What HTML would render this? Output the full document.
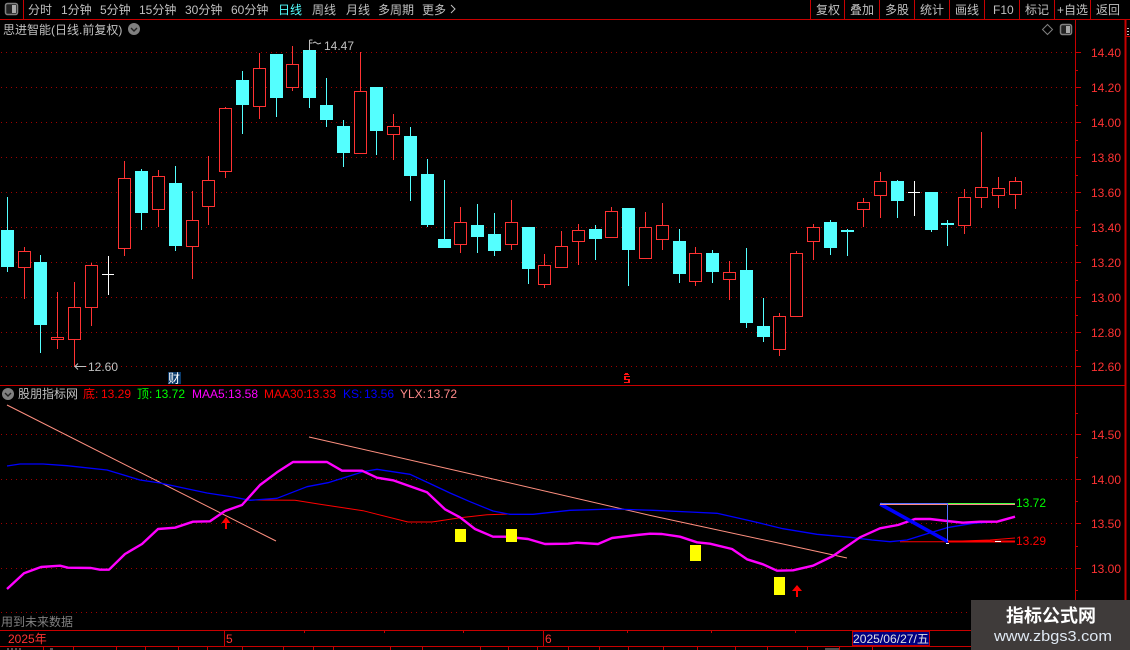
<!DOCTYPE html>
<html><head><meta charset="utf-8"><title>K线</title>
<style>
html,body{margin:0;padding:0;background:#000;width:1130px;height:650px;overflow:hidden}
svg{display:block}
text{font-family:"Liberation Sans","WenQuanYi Zen Hei","Noto Sans CJK SC",sans-serif;font-size:12px}
.g{fill:#c0c0c0}.r{fill:#ff3232}
</style></head><body>
<svg width="1130" height="650" viewBox="0 0 1130 650" xmlns="http://www.w3.org/2000/svg">
<rect width="1130" height="650" fill="#000"/>
<!-- grid -->
<g stroke="#a00000" stroke-dasharray="1 4" fill="none">
<path d="M1 52.5H1075M1 87.5H1075M1 122.5H1075M1 157.5H1075M1 192.5H1075M1 227.5H1075M1 262.5H1075M1 297.5H1075M1 332.5H1075M1 366.5H1075M1 434.5H1075M1 479.5H1075M1 523.5H1075M1 568.5H1075M1 612.5H971"/>
</g>
<!-- frame -->
<g stroke="#c80000" fill="none" shape-rendering="crispEdges">
<path d="M0 19.5H1130M23.5 0V19M810.5 0V19M844.5 0V19M879.5 0V19M914.5 0V19M949.5 0V19M984.5 0V19M1019.5 0V19M1054.5 0V19M1090.5 0V19"/>
<path d="M1075.5 19V600M0 385.5H1126M0 630.5H971M0 646.5H971M224.5 630V646M543.5 630V646M1126 36.5H1130"/>
<path d="M1125.5 19V600" stroke-width="2"/>
<path d="M304.5 630V633M384.5 630V633M463.5 630V633M627.5 630V633M711.5 630V633M795.5 630V633M43.5 646V650M73.5 646V650M116.5 646V650M145.5 646V650M178.5 646V650M207.5 646V650M242.5 646V650M283.5 646V650M313.5 646V650M333.5 646V650M390.5 646V650M422.5 646V650M480.5 646V650M508.5 646V650M537.5 646V650M568.5 646V650M599.5 646V650M628.5 646V650M663.5 646V650M697.5 646V650M735.5 646V650M767.5 646V650M807.5 646V650M839.5 646V650M872.5 646V650"/>
<path d="M1075 52.5H1081M1075 87.5H1081M1075 122.5H1081M1075 157.5H1081M1075 192.5H1081M1075 227.5H1081M1075 262.5H1081M1075 297.5H1081M1075 332.5H1081M1075 366.5H1081M1075 70.5H1078M1075 105.5H1078M1075 140.5H1078M1075 175.5H1078M1075 210.5H1078M1075 245.5H1078M1075 280.5H1078M1075 315.5H1078M1075 350.5H1078M1075 434.5H1081M1075 479.5H1081M1075 523.5H1081M1075 568.5H1081M1075 413.5H1078M1075 457.5H1078M1075 501.5H1078M1075 546.5H1078M1075 590.5H1078"/>
</g>
<path d="M1127 28.5h2M1127 31.5h2M1127 34.5h2" stroke="#c0c0c0" shape-rendering="crispEdges"/>
<path d="M7 649h2M11 649h2M15 649h2M19 649h2M50 649h3M825 649h14" stroke="#a0a0a0" shape-rendering="crispEdges"/>
<!-- top-left icon -->
<rect x="5.5" y="3.5" width="12" height="11" rx="2" fill="#222" stroke="#808080" stroke-width="1.5"/>
<rect x="12" y="5" width="4" height="8" fill="#a8a8a8"/>
<!-- toolbar text -->
<g class="g">
<text x="28" y="14">分时</text><text x="61" y="14">1分钟</text><text x="100" y="14">5分钟</text><text x="139" y="14">15分钟</text><text x="185" y="14">30分钟</text><text x="231" y="14">60分钟</text>
<text x="278" y="14" style="fill:#54ffff">日线</text><text x="312" y="14">周线</text><text x="346" y="14">月线</text><text x="378" y="14">多周期</text><text x="422" y="14">更多</text>
<text x="816" y="14">复权</text><text x="850" y="14">叠加</text><text x="885" y="14">多股</text><text x="920" y="14">统计</text><text x="955" y="14">画线</text><text x="993" y="14">F10</text><text x="1025" y="14">标记</text><text x="1057" y="14">+自选</text><text x="1096" y="14">返回</text>
<text x="3" y="34">思进智能(日线.前复权)</text>
</g>
<path d="M451 5l4 4-4 4" stroke="#c0c0c0" fill="none"/>
<circle cx="134" cy="29" r="6" fill="#808080"/><path d="M131 28l3 3 3-3" stroke="#222" stroke-width="1.4" fill="none"/>
<path d="M1047.5 24.5l5 5-5 5-5-5z" stroke="#808080" fill="none"/>
<rect x="1060.5" y="24.5" width="11" height="10" rx="2" fill="#222" stroke="#808080" stroke-width="1.5"/><rect x="1066" y="26" width="4" height="7" fill="#a8a8a8"/>
<!-- candle wicks -->
<g shape-rendering="crispEdges" fill="none">
<path stroke="#54ffff" d="M7.5 197V272M40.5 255V353M141.5 169V230M175.5 166V251M242.5 71V134M276.5 54V117M309.5 43V108M326.5 78V127M343.5 120V167M376.5 87V155M410.5 127V201M427.5 159V227M444.5 180V248M477.5 204V253M494.5 213V256M528.5 227V284M595.5 225V260M628.5 208V286M679.5 229V283M712.5 250V283M746.5 248V328M763.5 298V342M830.5 220V255M847.5 229V256M897.5 180V218M931.5 192V232M947.5 220V246"/>
<path stroke="#ff3232" d="M24.5 247V299M57.5 292V349M74.5 282V367M91.5 263V326M124.5 161V256M158.5 170V227M192.5 191V279M208.5 156V225M225.5 107V178M259.5 53V119M292.5 46V91M360.5 52V154M393.5 114V160M460.5 207V253M511.5 200V250M544.5 254V288M561.5 231V268M578.5 224V265M611.5 207V238M645.5 212V259M662.5 203V250M695.5 247V286M729.5 261V300M779.5 313V356M796.5 251V317M813.5 224V260M863.5 198V227M880.5 172V218M964.5 189V234M981.5 132V208M998.5 177V208M1015.5 177V209"/>
<path stroke="#fff" d="M108.5 256V295M102 274.5H114M914.5 181V216M908 192.5H920"/>
</g>
<!-- red bodies -->
<g fill="#000" stroke="#ff3232" shape-rendering="crispEdges">
<rect x="18.5" y="251.5" width="12" height="16"/><rect x="51.5" y="337.5" width="12" height="2"/><rect x="68.5" y="307.5" width="12" height="32"/><rect x="85.5" y="265.5" width="12" height="42"/><rect x="118.5" y="178.5" width="12" height="70"/><rect x="152.5" y="176.5" width="12" height="33"/><rect x="186.5" y="220.5" width="12" height="26"/><rect x="202.5" y="180.5" width="12" height="26"/><rect x="219.5" y="108.5" width="12" height="63"/><rect x="253.5" y="68.5" width="12" height="38"/><rect x="286.5" y="64.5" width="12" height="23"/><rect x="354.5" y="91.5" width="12" height="62"/><rect x="387.5" y="126.5" width="12" height="8"/><rect x="454.5" y="222.5" width="12" height="22"/><rect x="505.5" y="222.5" width="12" height="22"/><rect x="538.5" y="265.5" width="12" height="19"/><rect x="555.5" y="246.5" width="12" height="21"/><rect x="572.5" y="230.5" width="12" height="11"/><rect x="605.5" y="211.5" width="12" height="26"/><rect x="639.5" y="227.5" width="12" height="31"/><rect x="656.5" y="225.5" width="12" height="14"/><rect x="689.5" y="253.5" width="12" height="28"/><rect x="723.5" y="272.5" width="12" height="7"/><rect x="773.5" y="316.5" width="12" height="33"/><rect x="790.5" y="253.5" width="12" height="63"/><rect x="807.5" y="227.5" width="12" height="14"/><rect x="857.5" y="202.5" width="12" height="7"/><rect x="874.5" y="181.5" width="12" height="14"/><rect x="958.5" y="197.5" width="12" height="28"/><rect x="975.5" y="187.5" width="12" height="10"/><rect x="992.5" y="188.5" width="12" height="7"/><rect x="1009.5" y="181.5" width="12" height="13"/>
</g>
<!-- cyan bodies -->
<g fill="#54ffff" shape-rendering="crispEdges">
<rect x="1" y="230" width="13" height="37"/><rect x="34" y="262" width="13" height="63"/><rect x="135" y="171" width="13" height="42"/><rect x="169" y="183" width="13" height="63"/><rect x="236" y="80" width="13" height="25"/><rect x="270" y="54" width="13" height="44"/><rect x="303" y="50" width="13" height="48"/><rect x="320" y="105" width="13" height="15"/><rect x="337" y="126" width="13" height="27"/><rect x="370" y="87" width="13" height="44"/><rect x="404" y="136" width="13" height="40"/><rect x="421" y="174" width="13" height="51"/><rect x="438" y="239" width="13" height="9"/><rect x="471" y="225" width="13" height="12"/><rect x="488" y="234" width="13" height="17"/><rect x="522" y="227" width="13" height="42"/><rect x="589" y="229" width="13" height="10"/><rect x="622" y="208" width="13" height="42"/><rect x="673" y="241" width="13" height="33"/><rect x="706" y="253" width="13" height="19"/><rect x="740" y="270" width="13" height="53"/><rect x="757" y="326" width="13" height="11"/><rect x="824" y="222" width="13" height="26"/><rect x="841" y="230" width="13" height="2"/><rect x="891" y="181" width="13" height="20"/><rect x="925" y="192" width="13" height="38"/><rect x="941" y="223" width="13" height="2"/>
</g>
<!-- price labels -->
<g class="r">
<text x="1091" y="57">14.40</text><text x="1091" y="92">14.20</text><text x="1091" y="127">14.00</text><text x="1091" y="162">13.80</text><text x="1091" y="197">13.60</text><text x="1091" y="232">13.40</text><text x="1091" y="267">13.20</text><text x="1091" y="302">13.00</text><text x="1091" y="337">12.80</text><text x="1091" y="371">12.60</text>
<text x="1091" y="439">14.50</text><text x="1091" y="484">14.00</text><text x="1091" y="528">13.50</text><text x="1091" y="573">13.00</text>
</g>
<!-- hi/lo marks -->
<path d="M309.5 50V40M309.5 40h3M309.5 43h3M313 43l2-1 3 2 3-1" stroke="#c0c0c0" fill="none"/>
<text x="324" y="50" class="g">14.47</text>
<path d="M86 366.5H75M78 363.5l-3 3 3 3" stroke="#c0c0c0" fill="none"/>
<text x="88" y="371" class="g">12.60</text>
<rect x="168" y="372" width="13" height="12" fill="#0a3a6a"/>
<text x="168" y="382.500" style="fill:#fff">财</text>
<!-- S mark -->
<g fill="#ff1414" shape-rendering="crispEdges"><rect x="625" y="373" width="3" height="1"/><rect x="624" y="374" width="5" height="1"/><rect x="624" y="376" width="6" height="1"/><rect x="624" y="377" width="2" height="2"/><rect x="624" y="379" width="6" height="1"/><rect x="628" y="380" width="2" height="2"/><rect x="624" y="382" width="6" height="1"/></g>
<!-- legend -->
<circle cx="8" cy="394" r="6" fill="#808080"/><path d="M5 393l3 3 3-3" stroke="#222" stroke-width="1.4" fill="none"/>
<text x="18" y="398" class="g">股朋指标网</text>
<text x="83" y="398" style="fill:#ff0000">底:</text><text x="101" y="398" style="fill:#ff0000">13.29</text>
<text x="137" y="398" style="fill:#00ff00">顶:</text><text x="155" y="398" style="fill:#00ff00">13.72</text>
<text x="192" y="398" style="fill:#ff00ff">MAA5:</text><text x="228" y="398" style="fill:#ff00ff">13.58</text>
<text x="264" y="398" style="fill:#ff0000">MAA30:</text><text x="306" y="398" style="fill:#ff0000">13.33</text>
<text x="343" y="398" style="fill:#0000ff">KS:</text><text x="364" y="398" style="fill:#0000ff">13.56</text>
<text x="400" y="398" style="fill:#ff8a8a">YLX:</text><text x="427" y="398" style="fill:#ff8a8a">13.72</text>
<text x="1" y="626" style="fill:#808080">用到未来数据</text>
<!-- indicator lines -->
<g fill="none" stroke-linejoin="round">
<path stroke="#ff9080" d="M7 405L276 541M309 437L480 476L650 515.400L783 544L847 558"/>
<path stroke="#ff0000" d="M250 500L295 500.300L320 504.300L363 510.700L408 522L432 522L460 517.700L487 514.700L510 514"/>
<path stroke="#ff0000" d="M900 541.700H948M948 541.500L990 540L1015 538"/>
<path stroke="#0000ff" stroke-width="1.300" d="M7 466L20 464L43 464L67 465.700L107 470L140 480L160 483L207 493L233 497L250 500.300L277 498.300L307 486.700L328 482.700L363 471.700L377 469.300L410 474.300L433 485L450 493L470 501.700L493 511L510 514.300L533 514.300L570 510.300L613 509L653 510.300L690 512L717 513.300L750 520.700L783 528.700L817 534.300L850 537.300L872 540L890 541.700L907 540L923 535L947 527.700L973 523.300L997 521.700L1015 516.700"/>
<path stroke="#ff00ff" stroke-width="2.400" d="M7 589L24 573.300L41 567L60 565.700L68 567.700L91 568L100 569.700L109 569.700L125 554L142 544L158 529L175 527.700L193 521.700L210 521.300L225 511L242 505L260 485L277 472.300L293 462L327 462L342 470.700L362 470.700L377 477.700L393 480.300L427 492.300L445 509.300L460 517.300L475 529L493 536.700L505 536.700L528 539L545 544L568 543.700L577 542.700L598 544L612 538L637 535L650 533.700L662 534L680 536.700L697 542.300L710 543.700L732 549L747 559.300L763 564.300L777 570.700L793 570.300L813 565.700L833 556L850 544.300L860 537.300L880 528.300L898 525L915 519L930 519L947 521L963 522.700L980 521.700L997 521.700L1015 516.700"/>
<path stroke="#0000ff" stroke-width="3.600" d="M880 504L948 541.700"/>
<path stroke="#ff0000" stroke-width="2" d="M948 541.500H1015" shape-rendering="crispEdges"/>
<g shape-rendering="crispEdges">
<path stroke="#ff8a8a" stroke-width="1" d="M880 504.500H1015"/>
<path stroke="#5070ff" d="M880 503.500H948M947.500 504V541"/>
<path stroke="#40ff40" d="M948 503.500H1015"/>
<path stroke="#fff" d="M995 541.500H1001M946 543.500H949"/>
</g>
</g>
<text x="1016" y="507" style="fill:#00ff00">13.72</text>
<text x="1016" y="545" style="fill:#ff0000">13.29</text>
<!-- yellow blocks -->
<g fill="#ffff00" shape-rendering="crispEdges">
<rect x="455" y="529" width="11" height="13"/><rect x="506" y="529" width="11" height="13"/><rect x="690" y="545" width="11" height="16"/><rect x="774" y="577" width="11" height="18"/>
</g>
<!-- arrows -->
<g fill="#ff0000"><path d="M226 517l4.500 6h-3.500v6h-2v-6h-3.500z"/><path d="M797 585l5 6h-4v6h-2v-6h-4z"/></g>
<!-- axis text -->
<text x="8" y="643" class="r">2025年</text>
<text x="226" y="643" class="r">5</text>
<text x="545" y="643" class="r">6</text>
<rect x="852.500" y="631.500" width="77" height="14" fill="#000080" stroke="#c00000"/>
<text x="853" y="643" style="fill:#e0e0e0" textLength="76" lengthAdjust="spacingAndGlyphs">2025/06/27/五</text>
<!-- watermark -->
<rect x="971" y="600" width="159" height="50" fill="#3f3b3a"/>
<text x="1006" y="622" style="fill:#fff;font-size:18px;font-weight:bold">指标公式网</text>
<text x="994" y="641" style="fill:#dfe8f2;font-size:15px" textLength="118" lengthAdjust="spacingAndGlyphs">www.zbgs3.com</text>
</svg>
</body></html>
